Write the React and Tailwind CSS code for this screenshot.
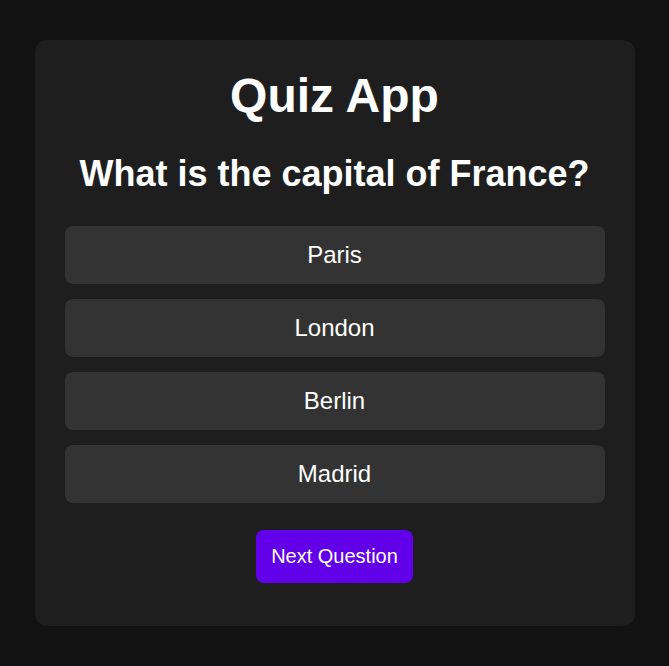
import React, { useState } from "react";

const questions = [
  {
    question: "What is the capital of France?",
    options: ["Paris", "London", "Berlin", "Madrid"],
  },
];

const App = () => {
  const [current, setCurrent] = useState(0);
  const [selected, setSelected] = useState(null);
  const q = questions[current];

  const handleNext = () => {
    setSelected(null);
    setCurrent((prev) => (prev + 1) % questions.length);
  };

  return (
    <div className="min-h-screen bg-[#121212] flex items-center justify-center font-['Liberation_Sans',Arial,sans-serif] text-white">
      <div className="w-[600px] bg-[#1e1e1e] rounded-xl p-[30px] text-center">
        <h1 className="text-[48px] leading-[52px] font-bold">Quiz App</h1>
        <h2 className="mt-[32px] text-[36px] leading-[40px] font-bold">{q.question}</h2>
        <div className="mt-[32px] flex flex-col gap-[15px]">
          {q.options.map((opt) => (
            <button
              key={opt}
              onClick={() => setSelected(opt)}
              className="w-full h-[58px] rounded-lg bg-[#333333] text-[24px] leading-[28px] text-white"
            >
              {opt}
            </button>
          ))}
        </div>
        <button
          onClick={handleNext}
          className="mt-[27px] mb-[13px] h-[53px] px-[15px] rounded-lg bg-[#6200ea] text-[20px] leading-[23px] text-white"
        >
          Next Question
        </button>
      </div>
    </div>
  );
};

export default App;
